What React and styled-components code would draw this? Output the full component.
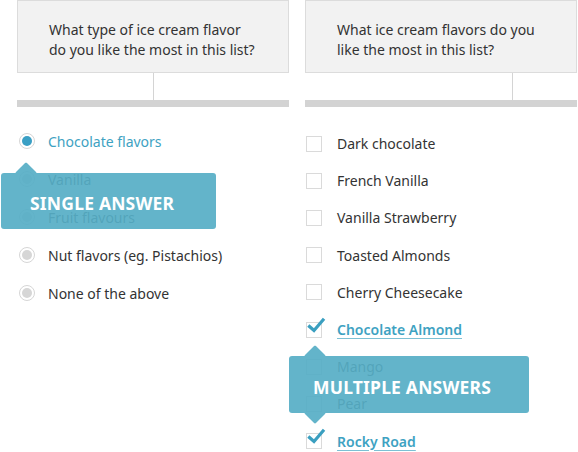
import React from "react";
import styled, { createGlobalStyle } from "styled-components";

const GlobalStyle = createGlobalStyle`
  html, body {
    margin: 0;
    padding: 0;
    background: #ffffff;
  }
  body {
    font-family: "Noto Sans", "Open Sans", sans-serif;
    color: #333333;
  }
`;

const singleOptions = [
  { label: "Chocolate flavors", checked: true },
  { label: "Vanilla" },
  { label: "Fruit flavours" },
  { label: "Nut flavors (eg. Pistachios)" },
  { label: "None of the above" },
];

const multiOptions = [
  { label: "Dark chocolate" },
  { label: "French Vanilla" },
  { label: "Vanilla Strawberry" },
  { label: "Toasted Almonds" },
  { label: "Cherry Cheesecake" },
  { label: "Chocolate Almond", checked: true },
  { label: "Mango" },
  { label: "Pear" },
  { label: "Rocky Road", checked: true },
];

const App = () => {
  return (
    <Page>
      <GlobalStyle />
      <Column>
        <QuestionBox>
          What type of ice cream flavor
          <br />
          do you like the most in this list?
        </QuestionBox>
        <Connector $left={136} />
        <Bar />
        <OptionList $rowHeight={38} $top={15}>
          {singleOptions.map((opt) => (
            <Option key={opt.label}>
              <Radio $checked={opt.checked} />
              <Label $checked={opt.checked}>{opt.label}</Label>
            </Option>
          ))}
          <Badge $left={-16} $top={66} $width={215} $height={56} $pad={29}>
            <Pointer $left={17} $side="top" />
            SINGLE ANSWER
          </Badge>
        </OptionList>
      </Column>
      <Column>
        <QuestionBox>
          What ice cream flavors do you
          <br />
          like the most in this list?
        </QuestionBox>
        <Connector $left={207} />
        <Bar />
        <OptionList $rowHeight={37.2} $top={18}>
          {multiOptions.map((opt) => (
            <Option key={opt.label}>
              <Checkbox $checked={opt.checked}>
                {opt.checked && (
                  <svg width="20" height="18" viewBox="0 0 20 18">
                    <path
                      d="M3.5 9.5 L8 13.5 L17 3"
                      fill="none"
                      stroke="#3a9fc0"
                      strokeWidth="3.2"
                      strokeLinecap="square"
                    />
                  </svg>
                )}
              </Checkbox>
              <Label $checked={opt.checked} $underline={opt.checked}>
                {opt.label}
              </Label>
            </Option>
          ))}
          <Badge $left={-16} $top={249} $width={240} $height={57} $pad={24}>
            <Pointer $left={18} $side="top" />
            <Pointer $left={18} $side="bottom" />
            MULTIPLE ANSWERS
          </Badge>
        </OptionList>
      </Column>
    </Page>
  );
};

const Page = styled.div`
  display: flex;
  gap: 16px;
  padding-left: 17px;
  width: 578px;
  height: 452px;
  box-sizing: border-box;
  overflow: hidden;
`;

const Column = styled.div`
  width: 272px;
  flex-shrink: 0;
  display: flex;
  flex-direction: column;

  & > * {
    flex-shrink: 0;
  }
`;

const QuestionBox = styled.div`
  height: 73px;
  box-sizing: border-box;
  padding: 19px 0 0 31px;
  background: #f2f2f2;
  border: 1px solid #dcdcdc;
  font-size: 14px;
  line-height: 20px;
  color: #333333;
`;

const Connector = styled.div`
  width: 1px;
  height: 27px;
  margin-left: ${(p) => p.$left}px;
  background: #d4d4d4;
`;

const Bar = styled.div`
  height: 7px;
  background: #d3d3d3;
`;

const OptionList = styled.div`
  position: relative;
  display: flex;
  flex-direction: column;
  padding-top: ${(p) => p.$top}px;

  & > div {
    height: ${(p) => p.$rowHeight}px;
    flex-shrink: 0;
  }
`;

const Option = styled.div`
  display: flex;
  align-items: center;
`;

const Radio = styled.span`
  width: 16px;
  height: 16px;
  margin-left: 2px;
  margin-right: 13px;
  box-sizing: border-box;
  border-radius: 50%;
  border: 1px solid #d6d6d6;
  background: #fff;
  display: flex;
  align-items: center;
  justify-content: center;

  &::after {
    content: "";
    width: 10px;
    height: 10px;
    border-radius: 50%;
    background: ${(p) => (p.$checked ? "#3a9fc4" : "#d6d6d6")};
  }
`;

const Checkbox = styled.span`
  position: relative;
  width: 16px;
  height: 16px;
  margin-left: 1px;
  margin-right: 15px;
  box-sizing: border-box;
  border: 1px solid #dadada;
  background: #fff;

  svg {
    position: absolute;
    left: -1px;
    top: -6px;
  }
`;

const Label = styled.span`
  font-size: 14px;
  color: ${(p) => (p.$checked ? "#3ea2c2" : "#333333")};
  font-weight: ${(p) => (p.$underline ? 600 : 400)};
  text-decoration: ${(p) => (p.$underline ? "underline" : "none")};
  text-decoration-color: #7cc0d4;
  text-underline-offset: 3px;
`;

const Badge = styled.div`
  position: absolute;
  left: ${(p) => p.$left}px;
  top: ${(p) => p.$top}px;
  width: ${(p) => p.$width}px;
  height: ${(p) => p.$height}px !important;
  box-sizing: border-box;
  padding: 4px 0 0 ${(p) => p.$pad}px;
  display: flex;
  align-items: center;
  background: rgba(86, 174, 197, 0.92);
  border-radius: 3px;
  color: #ffffff;
  font-size: 17.5px;
  font-weight: 700;
  letter-spacing: 0.2px;
`;

const Pointer = styled.span`
  position: absolute;
  left: ${(p) => p.$left}px;
  ${(p) => (p.$side === "top" ? "top: -8px;" : "bottom: -8px;")}
  width: 16px;
  height: 16px;
  background: rgba(86, 174, 197, 0.92);
  transform: rotate(45deg);
  border-radius: 2px;
  clip-path: ${(p) =>
    p.$side === "top"
      ? "polygon(0 0, 100% 0, 0 100%)"
      : "polygon(100% 0, 100% 100%, 0 100%)"};
`;

export default App;
